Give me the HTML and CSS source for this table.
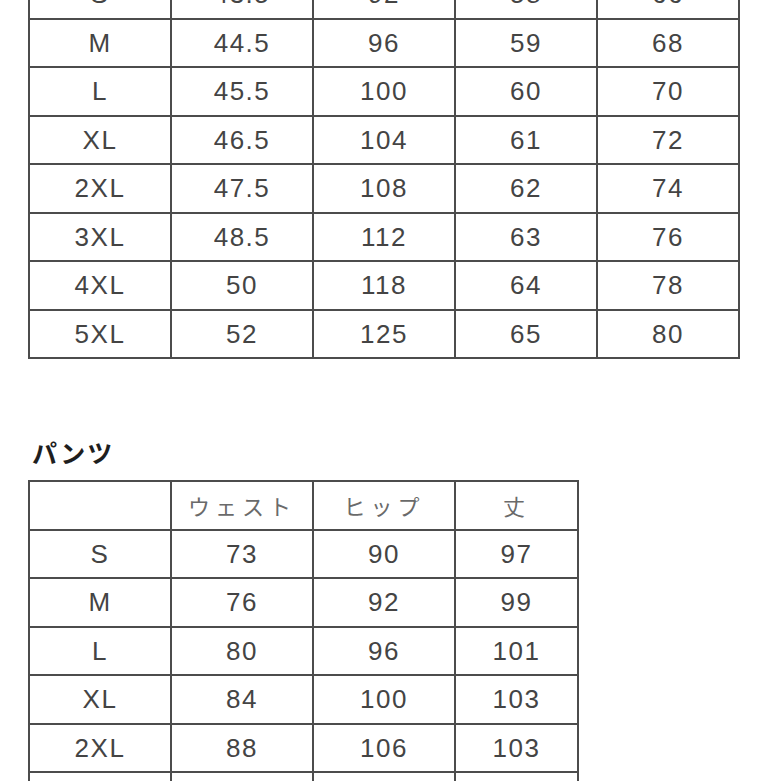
FILE: index.html
```html
<!DOCTYPE html>
<html lang="ja">
<head>
<meta charset="utf-8">
<title>サイズ表</title>
<link rel="stylesheet" href="styles.css">
</head>
<body>
<div class="page">
  <table class="chart chart-top">
    <tbody>
      <tr><td>S</td><td>43.5</td><td>92</td><td>58</td><td>66</td></tr>
      <tr><td>M</td><td>44.5</td><td>96</td><td>59</td><td>68</td></tr>
      <tr><td>L</td><td>45.5</td><td>100</td><td>60</td><td>70</td></tr>
      <tr><td>XL</td><td>46.5</td><td>104</td><td>61</td><td>72</td></tr>
      <tr><td>2XL</td><td>47.5</td><td>108</td><td>62</td><td>74</td></tr>
      <tr><td>3XL</td><td>48.5</td><td>112</td><td>63</td><td>76</td></tr>
      <tr><td>4XL</td><td>50</td><td>118</td><td>64</td><td>78</td></tr>
      <tr><td>5XL</td><td>52</td><td>125</td><td>65</td><td>80</td></tr>
    </tbody>
  </table>

  <h2 class="section-title">パンツ</h2>

  <table class="chart chart-pants">
    <thead>
      <tr><th></th><th>ウェスト</th><th>ヒップ</th><th>丈</th></tr>
    </thead>
    <tbody>
      <tr><td>S</td><td>73</td><td>90</td><td>97</td></tr>
      <tr><td>M</td><td>76</td><td>92</td><td>99</td></tr>
      <tr><td>L</td><td>80</td><td>96</td><td>101</td></tr>
      <tr><td>XL</td><td>84</td><td>100</td><td>103</td></tr>
      <tr><td>2XL</td><td>88</td><td>106</td><td>103</td></tr>
      <tr><td>3XL</td><td>92</td><td>110</td><td>105</td></tr>
    </tbody>
  </table>
</div>
</body>
</html>
```

FILE: styles.css
```css
html, body {
  margin: 0;
  padding: 0;
  background: #ffffff;
}

.page {
  padding-left: 28px;
  width: 753px;
  overflow: hidden;
  height: 781px;
}

.chart {
  border-collapse: collapse;
  table-layout: fixed;
  font-family: "Liberation Sans", Arial, sans-serif;
  color: #444444;
}

.chart td,
.chart th {
  border: 2px solid #4c4c4c;
  height: 46.5px;
  padding: 0;
  text-align: center;
  vertical-align: middle;
  font-size: 26px;
  font-weight: 400;
  letter-spacing: 1.5px;
  line-height: 1;
}

.chart-top {
  width: 711px;
  margin-top: -31px;
}

.chart-top td {
  width: 140px;
}

.chart-pants {
  width: 551px;
}

.chart-pants td:nth-child(-n+3),
.chart-pants th:nth-child(-n+3) {
  width: 140px;
}

.chart-pants th {
  font-family: "Noto Sans CJK JP", sans-serif;
  font-size: 22px;
  font-weight: 400;
  color: #6a6a6a;
  letter-spacing: 5px;
}

.section-title {
  margin: 78px 0 13px 4px;
  font-family: "Noto Sans CJK JP", sans-serif;
  font-size: 25px;
  font-weight: 700;
  color: #1e1e1e;
  letter-spacing: 2px;
  line-height: 30px;
}
```
